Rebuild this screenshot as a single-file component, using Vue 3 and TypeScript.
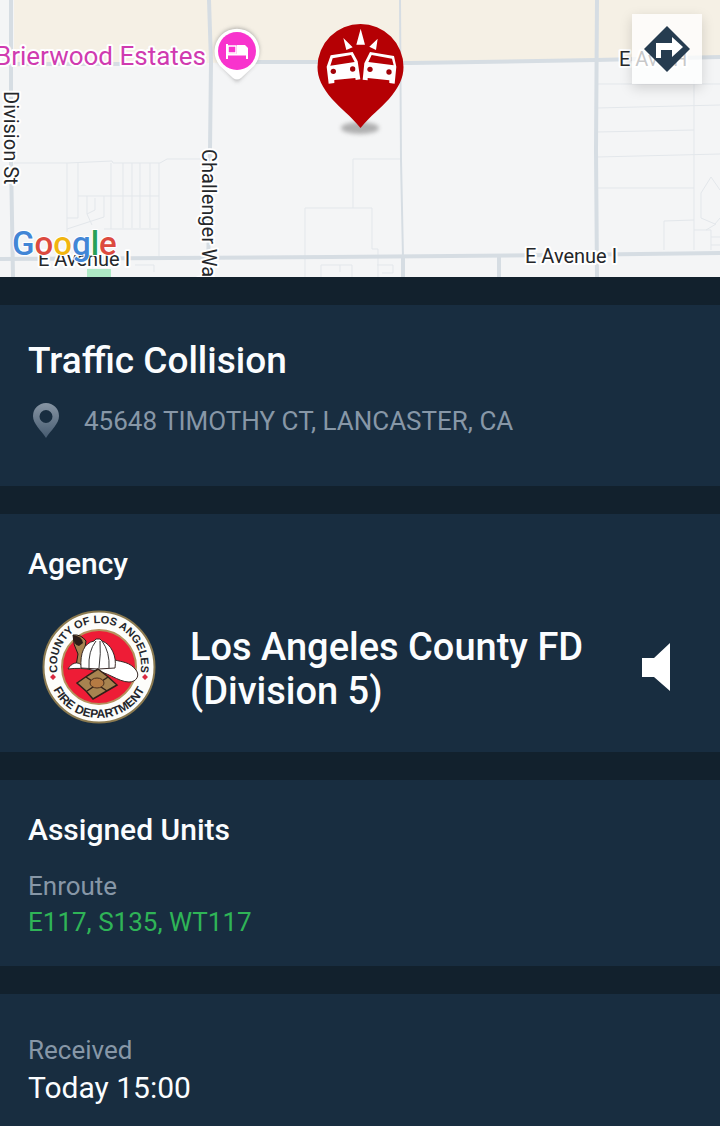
<script setup lang="ts">
interface UnitGroup {
  status: string
  units: string[]
}

const incident = {
  type: 'Traffic Collision',
  address: '45648 TIMOTHY CT, LANCASTER, CA',
  agency: 'Los Angeles County FD (Division 5)',
  received: 'Today 15:00',
}

const unitGroups: UnitGroup[] = [{ status: 'Enroute', units: ['E117', 'S135', 'WT117'] }]
</script>

<template>
  <main class="incident">
    <section class="map" aria-label="Incident map">
      <svg class="map-canvas" viewBox="0 0 720 277" role="img" aria-label="Map of Lancaster">
        <defs>
          <filter id="soft" x="-50%" y="-50%" width="200%" height="200%">
            <feGaussianBlur stdDeviation="2" />
          </filter>
        </defs>
        <rect width="720" height="277" fill="#f4f5f6" />
        <path d="M14 0H720V58L596 60L410 63L255 62L14 67Z" fill="#f5f0e5" />

        <g class="parcels">
          <path d="M14 163H68L112 161L113 163H160L167 159H205" />
          <path d="M67 163V232M78 163V218H67M111 163V229M123 163V228M132 163V228M140 163V228M150 163V228M159 163V256" />
          <path d="M78 196H159M67 229L104 217V196M87 196V214L95 210V198M87 214L92 225M104 229H159" />
          <path d="M305 277V208H372V249H378V277M353 208V159H400M321 277V265H352V277M340 265V272M377 265H393V273H382" />
          <path d="M597 84H720M597 108L720 105M597 132L694 130M597 157L720 154M597 188H694M694 80V250M664 250V221L694 220" />
          <path d="M711 177L701 193V218L715 224L720 218M711 177L720 190M694 230H711V250M711 237H720M711 245H720M716 224L706 230" />
          <path d="M135 265H154V272" />
        </g>
        <g class="roads">
          <path d="M11 0V160L13 277" stroke-width="4" />
          <path d="M209 0L211 62L210 150L208 277" stroke-width="4" />
          <path d="M0 64L120 64M255 62H330L410 63L596 60L720 57" stroke-width="4" />
          <path d="M0 259L330 257L560 255L720 253" stroke-width="4" />
          <path d="M597 0L596 150L597 277" stroke-width="4" />
          <path d="M400 0L401 160L403 257" stroke-width="2" />
          <path d="M403 257V277M499 256V277" stroke-width="4" />
        </g>
        <rect x="87" y="269" width="24" height="8" fill="#aeeac6" />

        <g class="street">
          <text x="38" y="266">E Avenue I</text>
          <text x="525" y="263">E Avenue I</text>
          <text x="619" y="66">E Ave H</text>
          <text transform="translate(4 91) rotate(90)">Division St</text>
          <text transform="translate(202 149) rotate(90)">Challenger Way</text>
        </g>
        <text class="place" x="206" y="65">Brierwood Estates</text>

        <g>
          <path d="M237 82L220 64A22 22 0 1 1 254 64Z" fill="#777" opacity=".6" filter="url(#soft)" />
          <path d="M233 78L220 66A22.500 22.500 0 1 1 254 66L241 78Q237 81 233 78Z" fill="#fff" />
          <circle cx="237" cy="51" r="19" fill="#f833cd" />
          <path d="M227 44V59M227 54.500H247M247 59V49" stroke="#fff" stroke-width="2" fill="none" />
          <path d="M228 46H236V53H228Z" fill="none" stroke="#fff" stroke-width="1.500" />
          <path d="M237 45H245L248 48V55H237Z" fill="#fff" />
        </g>

        <ellipse cx="360" cy="128" rx="19" ry="6" fill="#777" opacity=".55" filter="url(#soft)" />
        <path
          d="M360.500 128C350 115 341 109 332 99C322 87 317.500 78 317.500 67A43 43 0 0 1 403.500 67C403.500 78 399 87 389 99C380 109 371 115 360.500 128Z"
          fill="#b50004"
        />
        <g transform="translate(300 0) scale(.3333)">
          <g fill="#fff">
            <path d="M182 86L195 134H169ZM130 114L158 142L139 150ZM233 116L228 150L208 140Z" />
            <path
              fill-rule="evenodd"
              d="M92 166L158 156L173 184L181 238L167 240L166 234L103 240V249L86 251L80 200ZM98 175L91 197L164 186L153 165Z"
            />
            <path
              fill-rule="evenodd"
              d="M210 156L282 168L289 200L284 251L268 249V241L203 234V241L188 239L193 190ZM215 165L205 186L281 196L276 176Z"
            />
          </g>
          <g fill="#a10208">
            <circle cx="100" cy="214" r="8" />
            <circle cx="158" cy="207" r="8" />
            <circle cx="210" cy="208" r="8" />
            <circle cx="267" cy="216" r="8" />
          </g>
        </g>

        <text class="google" x="12" y="255">
          <tspan fill="#4286d6">G</tspan><tspan fill="#dc4a3f">o</tspan><tspan fill="#f1b50f">o</tspan><tspan fill="#4286d6">g</tspan><tspan fill="#27a156">l</tspan><tspan fill="#dc4a3f">e</tspan>
        </text>
      </svg>
      <button class="directions" type="button" aria-label="Directions">
        <svg width="48" height="48" viewBox="0 0 48 48" aria-hidden="true">
          <path d="M24 1L47 24L24 47L1 24Z" fill="#263c50" />
          <path d="M13 33V18H29V12L40 22L29 32V25H18V33Z" fill="#fff" />
        </svg>
      </button>
    </section>

    <section class="panel summary">
      <h1 class="title">{{ incident.type }}</h1>
      <p class="address">
        <svg class="pin" width="28" height="36" viewBox="0 0 28 36" aria-hidden="true">
          <defs>
            <linearGradient id="pinFade" x1="0" y1="0" x2="0" y2="1">
              <stop offset="0" stop-color="#8795a4" />
              <stop offset="1" stop-color="#465b70" />
            </linearGradient>
          </defs>
          <path
            fill="url(#pinFade)"
            fill-rule="evenodd"
            d="M14 0A13 13 0 0 0 1 13C1 21 9 27 14 35C19 27 27 21 27 13A13 13 0 0 0 14 0ZM14 7A6.500 6.500 0 1 1 14 20A6.500 6.500 0 1 1 14 7Z"
          />
        </svg>
        <span>{{ incident.address }}</span>
      </p>
    </section>

    <section class="panel agency">
      <h2 class="heading">Agency</h2>
      <div class="agency-row">
        <svg class="seal" width="114" height="114" viewBox="0 0 114 114" role="img" aria-label="County of Los Angeles Fire Department seal">
          <defs>
            <path id="sealTop" d="M20 75A42 42 0 1 1 94 75" />
            <path id="sealBottom" d="M6 57A51 51 0 0 0 108 57" />
          </defs>
          <circle cx="57" cy="57" r="55.500" fill="#fdfdfa" stroke="#8b7a50" stroke-width="2" />
          <circle cx="57" cy="57" r="37" fill="#ee1c36" stroke="#b5915d" stroke-width="2" />
          <g class="seal-text">
            <text><textPath href="#sealTop" startOffset="50%">COUNTY OF LOS ANGELES</textPath></text>
            <text class="seal-bottom"><textPath href="#sealBottom" startOffset="50%">FIRE DEPARTMENT</textPath></text>
          </g>
          <path d="M11 64L14 67L11 70L8 67ZM103 64L106 67L103 70L100 67Z" fill="#d92940" />
          <path d="M31 25Q39 24 44 31L40 57L34 56L36 44Q31 35 31 25Z" fill="#a78350" stroke="#211914" />
          <path d="M31 25Q40 26 41 33L37 36Q31 35 31 25Z" fill="#2b1d18" />
          <path d="M39 55C36 51 29 53 26 59C34 58 43 58 50 60C65 61 76 72 87 72C95 72 98 65 94 60C88 52 80 52 73 50Z" fill="#fff" stroke="#392a27" />
          <path d="M39 58C38 43 42 33 52 31L54 29H58L60 31C69 34 75 46 73 58Q57 60 39 58Z" fill="#fff" stroke="#392a27" />
          <path d="M54 31Q46 41 47 58M58 31Q59 43 57 58M60 31Q68 42 67 58" fill="none" stroke="#393737" />
          <path d="M56 59L65 66L75 75L63 82L51 89L44 81L35 73L45 66Z" fill="#a78350" stroke="#302018" stroke-width="1.500" />
          <path d="M44 67L65 81M66 67L45 81" stroke="#302018" stroke-width="1.500" />
          <ellipse cx="55" cy="73" rx="7" ry="5" fill="#b57a43" stroke="#4b2e1e" />
        </svg>
        <p class="agency-name">{{ incident.agency }}</p>
        <button class="speaker" type="button" aria-label="Listen">
          <svg width="28" height="48" viewBox="0 0 28 48" aria-hidden="true">
            <path d="M0 15H12L28 0V48L12 34H0Z" fill="#fff" />
          </svg>
        </button>
      </div>
    </section>

    <section class="panel units">
      <h2 class="heading">Assigned Units</h2>
      <dl v-for="group in unitGroups" :key="group.status" class="pair">
        <dt>{{ group.status }}</dt>
        <dd class="enroute">{{ group.units.join(', ') }}</dd>
      </dl>
    </section>

    <section class="panel received">
      <dl class="pair">
        <dt>Received</dt>
        <dd class="time">{{ incident.received }}</dd>
      </dl>
    </section>
  </main>
</template>

<style>
body {
  margin: 0;
  background: #182d40;
}
</style>

<style scoped>
.incident {
  min-height: 100vh;
  background: #12212d;
  color: #fbfdff;
  font-family: Roboto, 'Liberation Sans', sans-serif;
  display: flex;
  flex-direction: column;
  gap: 28px;
}
.map {
  position: relative;
}
.map-canvas {
  display: block;
  width: 100%;
}
.parcels path {
  fill: none;
  stroke: #e3e7eb;
  stroke-width: 1;
}
.roads path {
  fill: none;
  stroke: #d6dde3;
}
.street text,
.place {
  paint-order: stroke;
  stroke: #fff;
  stroke-width: 4px;
  stroke-linejoin: round;
}
.street text {
  font-size: 20px;
  fill: #25272a;
}
.place {
  font-size: 26px;
  fill: #d03bb0;
  text-anchor: end;
}
.google {
  font-size: 33px;
  font-weight: 500;
  paint-order: stroke;
  stroke: #fff;
  stroke-width: 2px;
}
.directions {
  position: absolute;
  top: 14px;
  right: 18px;
  width: 70px;
  height: 70px;
  padding: 0;
  border: 0;
  display: grid;
  place-items: center;
  background: rgba(255, 255, 255, 0.75);
  box-shadow: 0 4px 12px rgba(0, 0, 0, 0.15);
}
.panel {
  background: #182d40;
  padding: 28px;
}
h1,
h2,
p,
dl,
dd {
  margin: 0;
}
.title {
  font-size: 37px;
  line-height: 44px;
  font-weight: 500;
  padding-top: 6px;
}
.summary {
  padding-bottom: 47px;
}
.address {
  display: flex;
  align-items: center;
  gap: 24px;
  margin-top: 20px;
  padding-left: 4px;
  font-size: 26px;
  line-height: 36px;
  color: #8797a7;
}
.pin {
  flex: none;
}
.heading {
  font-size: 30px;
  line-height: 36px;
  font-weight: 500;
}
.agency {
  padding-top: 32px;
}
.agency-row {
  display: flex;
  align-items: center;
  gap: 34px;
  margin-top: 28px;
  padding: 0 22px 0 14px;
}
.seal,
.speaker {
  flex: none;
}
.seal-text {
  font-family: 'Liberation Sans', sans-serif;
  font-size: 11px;
  font-weight: 700;
  fill: #24262b;
  text-anchor: middle;
}
.seal-bottom {
  font-size: 12px;
}
.agency-name {
  flex: 1;
  font-size: 38px;
  line-height: 44px;
  font-weight: 500;
  padding-top: 4px;
}
.speaker {
  padding: 0;
  border: 0;
  background: none;
  display: flex;
}
.units {
  padding-top: 32px;
  padding-bottom: 26px;
}
.pair {
  font-size: 26px;
  line-height: 36px;
}
.units .pair {
  margin-top: 20px;
}
dt {
  color: #8797a7;
}
.enroute {
  color: #2fb457;
}
.received {
  flex: 1;
  padding-top: 38px;
  padding-bottom: 18px;
}
.time {
  font-size: 30px;
  line-height: 40px;
}
</style>
